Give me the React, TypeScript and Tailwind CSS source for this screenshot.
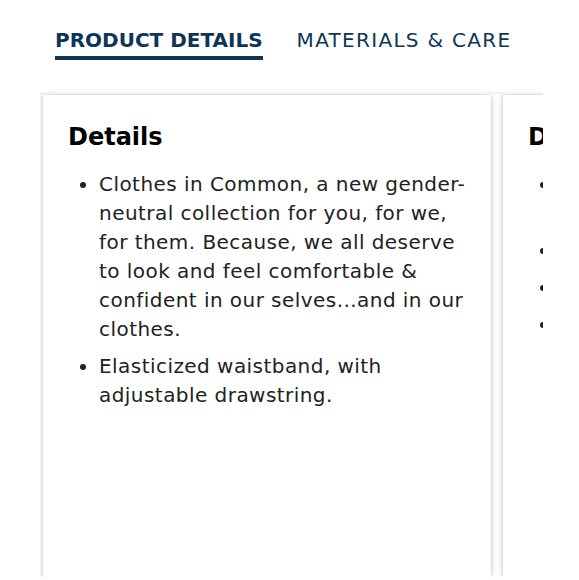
const details = [
  "Clothes in Common, a new gender-neutral collection for you, for we, for them. Because, we all deserve to look and feel comfortable & confident in our selves...and in our clothes.",
  "Elasticized waistband, with adjustable drawstring.",
];

// second card peeks in from the right, only its bullets show
const peekLines = [2, 1, 1, 1];

const DetailCard = ({ title, children }: { title: string; children: React.ReactNode }) => (
  <div className="shrink-0 w-[448px] h-[482px] bg-white shadow-[0_0_5px_rgba(0,0,0,0.3)] pl-[25px] pr-[20px] pt-[26px]">
    <h3 className="text-[24px] font-bold text-black leading-[32px]">{title}</h3>
    <ul className="mt-[17px] pl-[31px] list-disc text-[20px] leading-[29px] tracking-[0.45px] text-[#222]">
      {children}
    </ul>
  </div>
);

export default function App() {
  return (
    <div className="w-[579px] h-[580px] overflow-hidden bg-white font-['DejaVu_Sans',sans-serif]">
      {/* tabs */}
      <div className="flex gap-[34px] pl-[55px] pt-[27px]">
        <div className="flex flex-col">
          <span className="text-[20px] font-bold text-[#0e3558] leading-[26px]">PRODUCT DETAILS</span>
          <span className="mt-[3px] h-[4px] bg-[#0e3558]" />
        </div>
        <span className="text-[20px] tracking-[1.3px] text-[#0e3558] leading-[26px]">MATERIALS &amp; CARE</span>
      </div>

      {/* cards */}
      <div className="ml-[40px] mt-[32px] w-[503px] overflow-hidden border-t-[2px] border-[#f2f2f2] pl-[3px] pt-[1px] flex gap-[12px]">
        <DetailCard title="Details">
          {details.map((item, i) => (
            <li key={i} className="mb-[8px]">
              {item}
            </li>
          ))}
        </DetailCard>
        <DetailCard title="Details">
          {peekLines.map((n, i) => (
            <li key={i} className="mb-[8px]">
              {Array.from({ length: n }).map((_, j) => (
                <span key={j} className="block">&nbsp;</span>
              ))}
            </li>
          ))}
        </DetailCard>
      </div>
    </div>
  );
}
